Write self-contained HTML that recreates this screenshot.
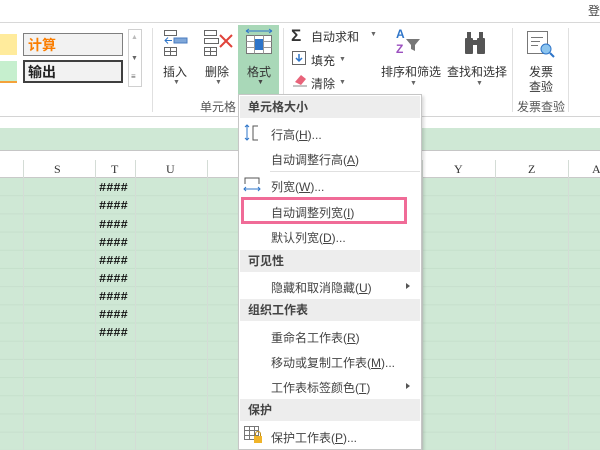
<!DOCTYPE html>
<html><head><meta charset="utf-8"><style>
*{margin:0;padding:0;box-sizing:border-box}
body{width:600px;height:450px;overflow:hidden;position:relative;background:#fff;font-family:"Liberation Sans","Noto Sans CJK SC",sans-serif;font-size:12px;color:#333}
.a{position:absolute}
.t{position:absolute;white-space:nowrap}
.mi{position:absolute;left:271px;font-size:12px;color:#444;white-space:nowrap}
.mh{position:absolute;left:240px;width:180px;height:22px;background:#ededed;font-size:12px;font-weight:bold;color:#444;padding-left:8px;line-height:22px}
.hash{position:absolute;left:99px;font-family:"Liberation Mono",monospace;font-size:12px;font-weight:bold;color:#111}
.arr{position:absolute;left:406px;width:0;height:0;border-left:4px solid #555;border-top:3px solid transparent;border-bottom:3px solid transparent}
</style></head><body>
<div class="t" style="left:588px;top:2px;font-size:12px;color:#444">登</div>
<div class="a" style="left:0;top:22px;width:600px;height:1px;background:#d8d8d8"></div>
<div class="a" style="left:0;top:23px;width:600px;height:94px;background:#fff"></div>
<div class="a" style="left:0;top:116px;width:600px;height:1px;background:#d4d4d4"></div>
<div class="a" style="left:0;top:34px;width:17px;height:21px;background:#ffeb9c"></div>
<div class="a" style="left:0;top:61px;width:17px;height:22px;background:#c6efce;border-bottom:2px solid #f4a23a"></div>
<div class="a" style="left:23px;top:33px;width:100px;height:23px;background:#f2f2f2;border:1px solid #7f7f7f"></div>
<div class="t" style="left:28px;top:35px;font-size:14px;font-weight:bold;color:#fa7d00">计算</div>
<div class="a" style="left:23px;top:60px;width:100px;height:23px;background:#f2f2f2;border:2px solid #3f3f3f"></div>
<div class="t" style="left:28px;top:62px;font-size:14px;font-weight:bold;color:#222">输出</div>
<div class="a" style="left:128px;top:29px;width:14px;height:58px;border:1px solid #d0d0d0"></div>
<div class="t" style="left:131px;top:34px;font-size:7px;color:#bbb">▲</div>
<div class="t" style="left:131px;top:55px;font-size:7px;color:#666">▼</div>
<div class="t" style="left:131px;top:72px;font-size:8px;color:#666">≡</div>
<div class="a" style="left:152px;top:28px;width:1px;height:84px;background:#e0e0e0"></div>
<svg class="a" style="left:160px;top:28px" width="32" height="32"><g fill="none" stroke="#666"><rect x="4.5" y="2.5" width="12" height="5"/><rect x="4.5" y="19.5" width="12" height="8"/><line x1="10.5" y1="19.5" x2="10.5" y2="27.5"/><line x1="4.5" y1="23.5" x2="16.5" y2="23.5"/></g><rect x="14" y="10" width="13" height="5" fill="#7fa7d9" stroke="#4a7bbf"/><path d="M5 12.5h7M8 9.5l-3 3 3 3" stroke="#2e75c9" fill="none"/></svg>
<div class="t" style="left:163px;top:63px;font-size:12px">插入</div>
<div class="t" style="left:173px;top:79px;font-size:7px;color:#666">▼</div>
<svg class="a" style="left:202px;top:28px" width="32" height="32"><g fill="none" stroke="#666"><rect x="2.5" y="2.5" width="12" height="5"/><rect x="2.5" y="19.5" width="12" height="8"/><line x1="8.5" y1="19.5" x2="8.5" y2="27.5"/><line x1="2.5" y1="23.5" x2="14.5" y2="23.5"/><rect x="2.5" y="10.5" width="14" height="5"/></g><path d="M18 7l12 12M30 7L18 19" stroke="#e0433a" stroke-width="2"/></svg>
<div class="t" style="left:205px;top:63px;font-size:12px">删除</div>
<div class="t" style="left:215px;top:79px;font-size:7px;color:#666">▼</div>
<div class="a" style="left:238px;top:25px;width:41px;height:70px;background:#a9d8b8"></div>
<svg class="a" style="left:243px;top:28px" width="32" height="32"><path d="M3 3h26M3 3l3-2M3 3l3 2M29 3l-3-2M29 3l-3 2" stroke="#2e75c9" fill="none"/><g fill="#fff" stroke="#777"><rect x="3.5" y="7.5" width="25" height="18"/></g><g stroke="#999"><line x1="11.5" y1="7.5" x2="11.5" y2="25.5"/><line x1="20.5" y1="7.5" x2="20.5" y2="25.5"/><line x1="3.5" y1="13.5" x2="28.5" y2="13.5"/><line x1="3.5" y1="19.5" x2="28.5" y2="19.5"/></g><rect x="12" y="11" width="8" height="11" fill="#2e75c9"/></svg>
<div class="t" style="left:247px;top:63px;font-size:12px">格式</div>
<div class="t" style="left:257px;top:79px;font-size:7px;color:#444">▼</div>
<div class="t" style="left:200px;top:98px;font-size:12px;color:#555">单元格</div>
<div class="a" style="left:283px;top:28px;width:1px;height:84px;background:#e0e0e0"></div>
<div class="t" style="left:291px;top:26px;font-size:17px;font-weight:bold;color:#333">Σ</div>
<div class="t" style="left:311px;top:28px;font-size:12px">自动求和</div>
<div class="t" style="left:370px;top:31px;font-size:7px;color:#666">▼</div>
<svg class="a" style="left:292px;top:51px" width="14" height="14"><rect x="0.5" y="0.5" width="13" height="13" fill="#fff" stroke="#666"/><path d="M7 3v7M4 7l3 3 3-3" stroke="#2e75c9" stroke-width="1.5" fill="none"/></svg>
<div class="t" style="left:311px;top:52px;font-size:12px">填充</div>
<div class="t" style="left:339px;top:56px;font-size:7px;color:#666">▼</div>
<svg class="a" style="left:292px;top:73px" width="16" height="14"><path d="M3 9l6-7 5 4-5 6z" fill="#e8637a"/><path d="M1 13h14" stroke="#888"/></svg>
<div class="t" style="left:311px;top:75px;font-size:12px">清除</div>
<div class="t" style="left:339px;top:79px;font-size:7px;color:#666">▼</div>
<div class="t" style="left:396px;top:28px;font-size:12px;font-weight:bold;color:#2e75c9;line-height:12px">A</div>
<div class="t" style="left:396px;top:43px;font-size:12px;font-weight:bold;color:#9b4fbf;line-height:12px">Z</div>
<svg class="a" style="left:405px;top:38px" width="16" height="14"><path d="M1 1h14l-5 6v6l-4-2V7z" fill="#777"/></svg>
<div class="t" style="left:381px;top:63px;font-size:12px">排序和筛选</div>
<div class="t" style="left:410px;top:80px;font-size:7px;color:#666">▼</div>
<svg class="a" style="left:462px;top:30px" width="26" height="26"><g fill="#555"><rect x="3" y="8" width="8" height="16" rx="1"/><rect x="15" y="8" width="8" height="16" rx="1"/><rect x="5" y="2" width="4" height="7"/><rect x="17" y="2" width="4" height="7"/><rect x="10" y="10" width="6" height="5"/></g></svg>
<div class="t" style="left:447px;top:63px;font-size:12px">查找和选择</div>
<div class="t" style="left:476px;top:80px;font-size:7px;color:#666">▼</div>
<div class="a" style="left:512px;top:28px;width:1px;height:84px;background:#e0e0e0"></div>
<svg class="a" style="left:526px;top:30px" width="30" height="28"><rect x="1.5" y="1.5" width="20" height="22" fill="#fff" stroke="#777"/><g stroke="#777"><line x1="5" y1="7.5" x2="17" y2="7.5"/><line x1="5" y1="11.5" x2="14" y2="11.5"/><line x1="5" y1="15.5" x2="12" y2="15.5"/></g><circle cx="20" cy="19" r="5" fill="#8cc4ee" stroke="#2e75c9"/><path d="M24 23l4 4" stroke="#2e75c9" stroke-width="2"/></svg>
<div class="t" style="left:529px;top:63px;font-size:12px">发票</div>
<div class="t" style="left:529px;top:78px;font-size:12px">查验</div>
<div class="t" style="left:517px;top:98px;font-size:12px;color:#555">发票查验</div>
<div class="a" style="left:568px;top:28px;width:1px;height:84px;background:#e0e0e0"></div>
<div class="a" style="left:0;top:128px;width:600px;height:22px;background:#cfe8d5"></div>
<div class="a" style="left:0;top:150px;width:600px;height:1px;background:#c6c6c6"></div>
<div class="a" style="left:0;top:151px;width:600px;height:27px;background:#fff;border-bottom:1px solid #c9c9c9"></div>
<div class="t" style="left:54px;top:162px;font-family:'Liberation Serif',serif;font-size:12px">S</div>
<div class="t" style="left:111px;top:162px;font-family:'Liberation Serif',serif;font-size:12px">T</div>
<div class="t" style="left:166px;top:162px;font-family:'Liberation Serif',serif;font-size:12px">U</div>
<div class="t" style="left:454px;top:162px;font-family:'Liberation Serif',serif;font-size:12px">Y</div>
<div class="t" style="left:528px;top:162px;font-family:'Liberation Serif',serif;font-size:12px">Z</div>
<div class="t" style="left:592px;top:162px;font-family:'Liberation Serif',serif;font-size:12px">A</div>
<div class="a" style="left:0;top:178px;width:600px;height:272px;background-color:#cfe8d5;background-image:linear-gradient(to bottom,transparent 17px,#c6dfcc 17px);background-size:100% 18.2px"></div>
<svg class="a" style="left:0;top:160px" width="600" height="290"><g stroke="#d4dcd6"><line x1="23.5" y1="0" x2="23.5" y2="290"/><line x1="95.5" y1="0" x2="95.5" y2="290"/><line x1="135.5" y1="0" x2="135.5" y2="290"/><line x1="207.5" y1="0" x2="207.5" y2="290"/><line x1="495.5" y1="0" x2="495.5" y2="290"/><line x1="568.5" y1="0" x2="568.5" y2="290"/><line x1="422.5" y1="0" x2="422.5" y2="290"/></g></svg>
<div class="hash" style="top:181px">####</div>
<div class="hash" style="top:199px">####</div>
<div class="hash" style="top:218px">####</div>
<div class="hash" style="top:236px">####</div>
<div class="hash" style="top:254px">####</div>
<div class="hash" style="top:272px">####</div>
<div class="hash" style="top:290px">####</div>
<div class="hash" style="top:308px">####</div>
<div class="hash" style="top:326px">####</div>
<div class="a" style="left:238px;top:94px;width:184px;height:356px;background:#fff;border:1px solid #c6c6c6;box-shadow:2px 2px 3px rgba(0,0,0,.15)"></div>
<div class="mh" style="top:96px">单元格大小</div>
<svg class="a" style="left:243px;top:124px" width="20" height="18"><path d="M4 1v15M2 3l2-2 2 2M2 14l2 2 2-2" stroke="#2e75c9" fill="none"/><path d="M15 2H10v14h5" stroke="#555" fill="none"/></svg>
<div class="mi" style="top:126px">行高(<u>H</u>)...</div>
<div class="mi" style="top:151px">自动调整行高(<u>A</u>)</div>
<div class="a" style="left:270px;top:171px;width:150px;height:1px;background:#e0e0e0"></div>
<svg class="a" style="left:243px;top:176px" width="20" height="18"><path d="M2 8V2h14v6" stroke="#555" fill="none"/><path d="M1 13h16M3 11l-2 2 2 2M15 11l2 2-2 2" stroke="#2e75c9" fill="none"/></svg>
<div class="mi" style="top:178px">列宽(<u>W</u>)...</div>
<div class="a" style="left:241px;top:197px;width:166px;height:27px;border:3px solid #f06b97"></div>
<div class="mi" style="top:204px">自动调整列宽(<u>I</u>)</div>
<div class="mi" style="top:229px">默认列宽(<u>D</u>)...</div>
<div class="mh" style="top:250px">可见性</div>
<div class="mi" style="top:279px">隐藏和取消隐藏(<u>U</u>)</div>
<div class="arr" style="top:283px"></div>
<div class="mh" style="top:299px">组织工作表</div>
<div class="mi" style="top:329px">重命名工作表(<u>R</u>)</div>
<div class="mi" style="top:354px">移动或复制工作表(<u>M</u>)...</div>
<div class="mi" style="top:379px">工作表标签颜色(<u>T</u>)</div>
<div class="arr" style="top:383px"></div>
<div class="mh" style="top:399px">保护</div>
<svg class="a" style="left:244px;top:426px" width="20" height="18"><g fill="none" stroke="#777"><rect x="0.5" y="0.5" width="14" height="13"/><line x1="5.5" y1="0.5" x2="5.5" y2="13.5"/><line x1="10.5" y1="0.5" x2="10.5" y2="13.5"/><line x1="0.5" y1="4.5" x2="14.5" y2="4.5"/><line x1="0.5" y1="9.5" x2="14.5" y2="9.5"/></g><rect x="10" y="10" width="8" height="7" fill="#f0b429"/><path d="M11.5 10V8a2.5 2.5 0 0 1 5 0v2" stroke="#c08a10" fill="none"/></svg>
<div class="mi" style="top:429px">保护工作表(<u>P</u>)...</div>
</body></html>
